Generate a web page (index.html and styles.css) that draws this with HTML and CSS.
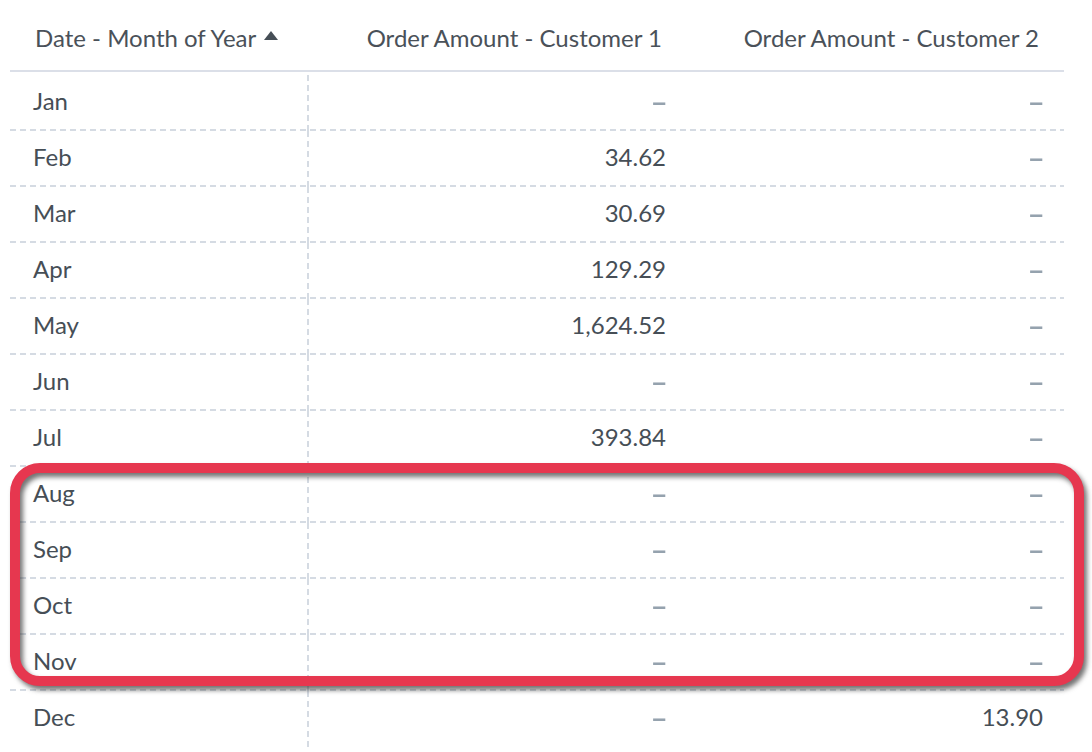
FILE: index.html
```html
<!DOCTYPE html>
<html>
<head>
<meta charset="utf-8">
<link rel="stylesheet" href="styles.css">
</head>
<body>
<div class="table">
  <div class="head">
    <div class="hcell first">Date - Month of Year <span class="sort"></span></div>
    <div class="hcell num">Order Amount - Customer 1</div>
    <div class="hcell num">Order Amount - Customer 2</div>
  </div>
  <div class="body">
    <div class="row"><div class="cell first">Jan</div><div class="cell num"><span class="na">–</span></div><div class="cell num"><span class="na">–</span></div></div>
    <div class="row"><div class="cell first">Feb</div><div class="cell num">34.62</div><div class="cell num"><span class="na">–</span></div></div>
    <div class="row"><div class="cell first">Mar</div><div class="cell num">30.69</div><div class="cell num"><span class="na">–</span></div></div>
    <div class="row"><div class="cell first">Apr</div><div class="cell num">129.29</div><div class="cell num"><span class="na">–</span></div></div>
    <div class="row"><div class="cell first">May</div><div class="cell num">1,624.52</div><div class="cell num"><span class="na">–</span></div></div>
    <div class="row"><div class="cell first">Jun</div><div class="cell num"><span class="na">–</span></div><div class="cell num"><span class="na">–</span></div></div>
    <div class="row"><div class="cell first">Jul</div><div class="cell num">393.84</div><div class="cell num"><span class="na">–</span></div></div>
    <div class="row"><div class="cell first">Aug</div><div class="cell num"><span class="na">–</span></div><div class="cell num"><span class="na">–</span></div></div>
    <div class="row"><div class="cell first">Sep</div><div class="cell num"><span class="na">–</span></div><div class="cell num"><span class="na">–</span></div></div>
    <div class="row"><div class="cell first">Oct</div><div class="cell num"><span class="na">–</span></div><div class="cell num"><span class="na">–</span></div></div>
    <div class="row"><div class="cell first">Nov</div><div class="cell num"><span class="na">–</span></div><div class="cell num"><span class="na">–</span></div></div>
    <div class="row last"><div class="cell first">Dec</div><div class="cell num"><span class="na">–</span></div><div class="cell num">13.90</div></div>
  </div>
  <div class="highlight"></div>
</div>
</body>
</html>
```
FILE: styles.css
```css
html, body {
  margin: 0;
  padding: 0;
  background: #ffffff;
}
body {
  font-family: Lato, "Noto Sans", sans-serif;
  color: #464e56;
  font-size: 24px;
}
.table {
  position: relative;
  width: 1054px;
  margin-left: 10px;
}
.head {
  display: grid;
  grid-template-columns: 299px 378px 377px;
  height: 70px;
  border-bottom: 2px solid #dbdfe8;
}
.hcell {
  display: flex;
  align-items: center;
  padding-top: 4px;
  color: #4a5159;
  white-space: nowrap;
}
.hcell.first {
  padding-left: 25px;
}
.hcell.num {
  justify-content: flex-end;
  padding-right: 25px;
}
.sort {
  display: inline-block;
  width: 0;
  height: 0;
  margin-left: 8px;
  margin-bottom: 4px;
  border-left: 7px solid transparent;
  border-right: 7px solid transparent;
  border-bottom: 9px solid #464e56;
}
.body {
  padding-top: 3px;
}
.row {
  display: grid;
  grid-template-columns: 299px 378px 377px;
  height: 56px;
  background-image: linear-gradient(to right, #d5dbe3 6px, transparent 6px);
  background-size: 10px 2px;
  background-repeat: repeat-x;
  background-position: 0 100%;
}
.row.last {
  background: none;
}
.cell {
  display: flex;
  align-items: center;
  padding-bottom: 6px;
  white-space: nowrap;
}
.cell.first {
  padding-left: 23px;
  background-image: linear-gradient(to bottom, #d5dbe3 6px, transparent 6px);
  background-size: 2px 10px;
  background-repeat: repeat-y;
  background-position: 100% 0;
}
.cell.num {
  justify-content: flex-end;
  padding-right: 21px;
}
.na {
  display: inline-block;
  font-weight: 700;
  color: #95a2ae;
  margin-right: -2px;
  transform: scale(1.25, 1.2);
  transform-origin: 100% 50%;
}
.highlight {
  position: absolute;
  left: 0;
  top: 463px;
  width: 1074px;
  height: 223px;
  box-sizing: border-box;
  border: 10.5px solid #e6374f;
  border-radius: 30px;
  filter: drop-shadow(3px 4px 2.5px rgba(40, 40, 40, 0.65));
}
```
